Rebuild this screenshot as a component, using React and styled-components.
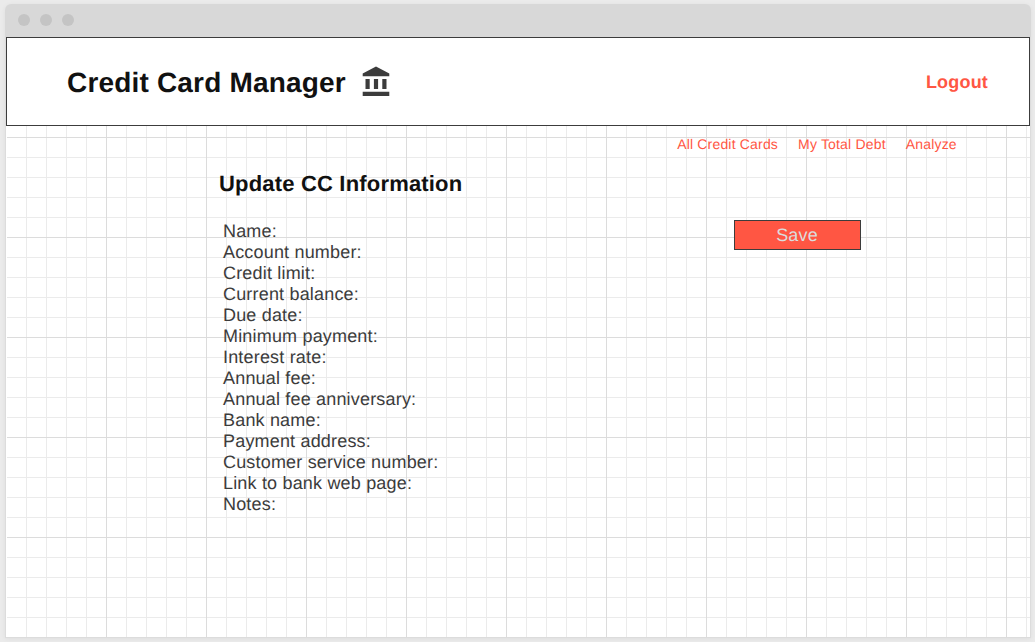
import React from "react";
import styled, { createGlobalStyle } from "styled-components";

const GlobalStyle = createGlobalStyle`
  body {
    margin: 0;
    background: #ebebeb;
    font-family: "Liberation Sans", Arial, sans-serif;
    letter-spacing: 0.18px;
    text-rendering: geometricPrecision;
  }
`;

const Page = styled.div`
  box-sizing: border-box;
  height: 642px;
  padding: 4px 4px 4px 5px;
  overflow: hidden;
`;

const Window = styled.div`
  box-sizing: border-box;
  display: flex;
  flex-direction: column;
  height: 634px;
  border-radius: 6px 6px 0 0;
  box-shadow: 0 1px 5px rgba(0, 0, 0, 0.06);
`;

const TitleBar = styled.div`
  box-sizing: border-box;
  display: flex;
  align-items: center;
  gap: 10px;
  height: 33px;
  padding: 0 13px 1px;
  border-radius: 6px 6px 0 0;
  background: #d8d8d8;
`;

const Dot = styled.span`
  width: 12px;
  height: 12px;
  border-radius: 50%;
  background: #c4c4c4;
`;

const Canvas = styled.div`
  box-sizing: border-box;
  flex: 1;
  border: 1px solid #dcdcdc;
  border-top: 0;
  background-color: #fff;
  background-image:
    linear-gradient(to right, #fff 1px, transparent 1px),
    linear-gradient(to right, #dcdcdc 1px, transparent 1px),
    linear-gradient(to bottom, #dcdcdc 1px, transparent 1px),
    linear-gradient(to right, #ebebeb 1px, transparent 1px),
    linear-gradient(to bottom, #ebebeb 1px, transparent 1px);
  background-size: 100% 100%, 100px 100px, 100px 100px, 20px 20px, 20px 20px;
`;

const Header = styled.header`
  box-sizing: border-box;
  display: flex;
  align-items: center;
  height: 89px;
  padding: 0 41px 0 60px;
  border: 1px solid #3c3c3c;
  background: #fff;
`;

const Title = styled.h1`
  margin: 3px 16.5px 0 0;
  color: #111;
  font-size: 28px;
  line-height: 32px;
`;

const BankIcon = styled.svg`
  width: 28px;
  height: 30px;
  margin-bottom: 1px;
  fill: #3c3c3c;
`;

const Logout = styled.a`
  margin-left: auto;
  color: #ff5643;
  font-size: 18px;
  font-weight: 700;
  line-height: 20px;
`;

const Nav = styled.nav`
  display: flex;
  justify-content: flex-end;
  gap: 20px;
  padding: 10px 73.2px 0 0;
`;

const NavLink = styled.a`
  color: #ff5643;
  font-size: 14px;
  line-height: 16px;
`;

const Main = styled.main`
  padding: 19px 169px 0 213px;
`;

const Heading = styled.h2`
  margin: 0;
  color: #111;
  font-size: 22px;
  line-height: 26px;
`;

const Content = styled.div`
  display: flex;
  justify-content: space-between;
  align-items: flex-start;
  padding-top: 23px;
`;

const Fields = styled.ul`
  margin: 0;
  padding: 1px 0 0 4px;
  list-style: none;
`;

const Field = styled.li`
  color: #3c3c3c;
  font-size: 18px;
  line-height: 21px;
`;

const SaveButton = styled.button`
  box-sizing: border-box;
  width: 127px;
  height: 30px;
  padding: 0 1px 0 0;
  border: 1px solid #3c3c3c;
  background: #ff5643;
  color: #dcdcdc;
  font: inherit;
  letter-spacing: inherit;
  text-rendering: inherit;
  font-size: 18px;
  line-height: 20px;
`;

const links = ["All Credit Cards", "My Total Debt", "Analyze"];

const fields = [
  "Name:",
  "Account number:",
  "Credit limit:",
  "Current balance:",
  "Due date:",
  "Minimum payment:",
  "Interest rate:",
  "Annual fee:",
  "Annual fee anniversary:",
  "Bank name:",
  "Payment address:",
  "Customer service number:",
  "Link to bank web page:",
  "Notes:",
];

export default function App() {
  return (
    <Page>
      <GlobalStyle />
      <Window>
        <TitleBar>
          <Dot />
          <Dot />
          <Dot />
        </TitleBar>
        <Canvas>
          <Header>
            <Title>Credit Card Manager</Title>
            <BankIcon viewBox="1.5 0.64 20 21.43">
              <path d="M4 10v7h3v-7H4zm6 0v7h3v-7h-3zM2 22h19v-3H2v3zm14-12v7h3v-7h-3zm-4.5-9L2 6v2h19V6l-9.5-5z" />
            </BankIcon>
            <Logout>Logout</Logout>
          </Header>
          <Nav>
            {links.map((label) => (
              <NavLink key={label}>{label}</NavLink>
            ))}
          </Nav>
          <Main>
            <Heading>Update CC Information</Heading>
            <Content>
              <Fields>
                {fields.map((label) => (
                  <Field key={label}>{label}</Field>
                ))}
              </Fields>
              <SaveButton>Save</SaveButton>
            </Content>
          </Main>
        </Canvas>
      </Window>
    </Page>
  );
}
